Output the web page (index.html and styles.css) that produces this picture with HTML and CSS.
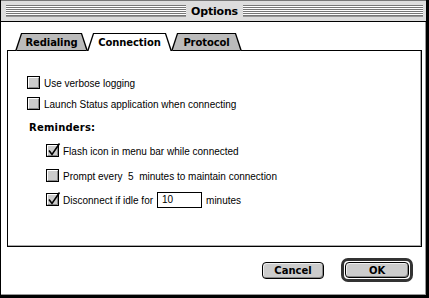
FILE: index.html
```html
<!DOCTYPE html>
<html lang="en">
<head>
	<meta charset="UTF-8"/>
	<title>Options</title>
	<link rel="stylesheet" href="styles.css">
</head>
<body>
	<div class="window">
		<div class="titlebar">
			<div class="stripes"></div>
			<div class="title">Options</div>
			<div class="stripes"></div>
		</div>
		<div class="content">
			<div class="tabs">
				<div class="tab tab-redial"><span class="tab-fill">Redialing</span></div>
				<div class="tab tab-conn active"><span class="tab-fill">Connection</span></div>
				<div class="tab tab-proto"><span class="tab-fill">Protocol</span></div>
			</div>
			<div class="panel">
				<div class="row row1">
					<svg class="cb" width="15" height="14" viewBox="0 0 15 14"><rect x="0.5" y="1.5" width="12" height="12" fill="#ccc" stroke="#000"/><path d="M1.5 12V2.5H11.5" stroke="#fff" fill="none"/><path d="M11.5 3V12.5H2" stroke="#888" fill="none"/></svg>
					<span>Use verbose logging</span>
				</div>
				<div class="row row2">
					<svg class="cb" width="15" height="14" viewBox="0 0 15 14"><rect x="0.5" y="1.5" width="12" height="12" fill="#ccc" stroke="#000"/><path d="M1.5 12V2.5H11.5" stroke="#fff" fill="none"/><path d="M11.5 3V12.5H2" stroke="#888" fill="none"/></svg>
					<span>Launch Status application when connecting</span>
				</div>
				<div class="heading">Reminders:</div>
				<div class="row sub row3">
					<svg class="cb" width="15" height="14" viewBox="0 0 15 14"><rect x="0.5" y="1.5" width="12" height="12" fill="#ccc" stroke="#000"/><path d="M1.5 12V2.5H11.5" stroke="#fff" fill="none"/><path d="M11.5 3V12.5H2" stroke="#888" fill="none"/><path d="M3 7.5L6 11.5L13.5 0.5" stroke="#000" stroke-width="1.6" fill="none"/></svg>
					<span>Flash icon in menu bar while connected</span>
				</div>
				<div class="row sub row4">
					<svg class="cb" width="15" height="14" viewBox="0 0 15 14"><rect x="0.5" y="1.5" width="12" height="12" fill="#ccc" stroke="#000"/><path d="M1.5 12V2.5H11.5" stroke="#fff" fill="none"/><path d="M11.5 3V12.5H2" stroke="#888" fill="none"/></svg>
					<span>Prompt every&nbsp; 5&nbsp; minutes to maintain connection</span>
				</div>
				<div class="row sub row5">
					<svg class="cb" width="15" height="14" viewBox="0 0 15 14"><rect x="0.5" y="1.5" width="12" height="12" fill="#ccc" stroke="#000"/><path d="M1.5 12V2.5H11.5" stroke="#fff" fill="none"/><path d="M11.5 3V12.5H2" stroke="#888" fill="none"/><path d="M3 7.5L6 11.5L13.5 0.5" stroke="#000" stroke-width="1.6" fill="none"/></svg>
					<span>Disconnect if idle for</span>
					<span class="field">10</span>
					<span>minutes</span>
				</div>
			</div>
			<div class="buttons">
				<div class="btn">Cancel</div>
				<div class="ring"><div class="btn btn-ok">OK</div></div>
			</div>
		</div>
	</div>
</body>
</html>
```

FILE: styles.css
```css
* { margin: 0; padding: 0; box-sizing: border-box; }
body { background-color: #fff; }

.window {
	width: 429px;
	height: 298px;
	display: flex;
	flex-direction: column;
	border-left: 1px solid #000;
	border-right: 3px solid #000;
	border-bottom: 3px solid #000;
	background-color: #fff;
	font-family: "Liberation Sans", Arial, sans-serif;
}

.titlebar {
	height: 22px;
	display: flex;
	align-items: center;
	padding: 0 3px 0 5px;
	gap: 5px;
	background-color: #ddd;
	border-top: 1px solid #777;
	border-bottom: 1px solid #000;
}
.stripes {
	flex: 1;
	height: 12px;
	background: repeating-linear-gradient(to bottom, #777 0 1px, #fff 1px 2px);
	border-bottom: 1px solid #999;
}
.title {
	font-family: "DejaVu Sans", sans-serif;
	font-weight: bold;
	font-size: 11px;
	letter-spacing: -0.2px;
}

.content {
	flex: 1;
	display: flex;
	flex-direction: column;
	box-shadow: inset -1px -1px #999;
	padding: 11px 0 0 6px;
}

.tabs {
	display: flex;
	height: 18px;
	margin-left: 8px;
	margin-bottom: -1px;
	position: relative;
	z-index: 1;
}
.tab {
	height: 18px;
	background-color: #000;
	clip-path: polygon(0 100%, 6px 0, calc(100% - 6px) 0, 100% 100%);
	display: flex;
}
.tab-fill {
	flex: 1;
	display: flex;
	align-items: center;
	justify-content: center;
	padding-top: 1px;
	background-color: #bbb;
	clip-path: polygon(1.5px 100%, 7px 1px, calc(100% - 7px) 1px, calc(100% - 1.5px) 100%);
	font-family: "DejaVu Sans", sans-serif;
	font-weight: bold;
	font-size: 10px;
	letter-spacing: -0.1px;
	box-shadow: inset 0 -1px #000;
}
.tab-redial { width: 73px; }
.tab-conn { width: 85px; margin-left: -1px; }
.tab-proto { width: 71px; margin-left: -1px; }
.active .tab-fill {
	background-color: #fff;
	box-shadow: none;
}

.panel {
	width: 415px;
	height: 197px;
	border: 1px solid #000;
	box-shadow: inset -1px -1px #aaa;
	padding: 25px 0 0 19px;
	font-size: 10px;
	display: flex;
	flex-direction: column;
}
.row {
	height: 14px;
	display: flex;
	align-items: center;
}
.row .cb { margin: -2px 2px 0 0; }
.sub { margin-left: 19px; }
.row2 { margin-top: 7px; }
.heading {
	margin-top: 10px;
	height: 14px;
	line-height: 14px;
	margin-left: 2px;
	font-family: "DejaVu Sans", sans-serif;
	font-weight: bold;
	font-size: 10px;
	letter-spacing: 0.2px;
}
.row3 { margin-top: 9px; }
.row4 { margin-top: 11px; }
.row5 { margin-top: 10px; }
.field {
	width: 45px;
	height: 16px;
	border: 1px solid #000;
	margin: 0 4px;
	padding-left: 4px;
	line-height: 14px;
}

.buttons {
	display: flex;
	justify-content: flex-end;
	align-items: center;
	gap: 17px;
	margin-top: 11px;
	padding-right: 13px;
}
.btn {
	width: 62px;
	height: 17px;
	border: 1px solid #000;
	border-radius: 4px;
	background-color: #ccc;
	box-shadow: inset 1px 1px #eee, inset -1px -1px #888;
	display: flex;
	align-items: center;
	justify-content: center;
	font-family: "DejaVu Sans", sans-serif;
	font-weight: bold;
	font-size: 10px;
}
.ring {
	width: 72px;
	height: 24px;
	border: 3px solid #333;
	border-radius: 7px;
	padding: 1px;
	display: flex;
}
.btn-ok {
	width: 100%;
	height: 100%;
}
```
